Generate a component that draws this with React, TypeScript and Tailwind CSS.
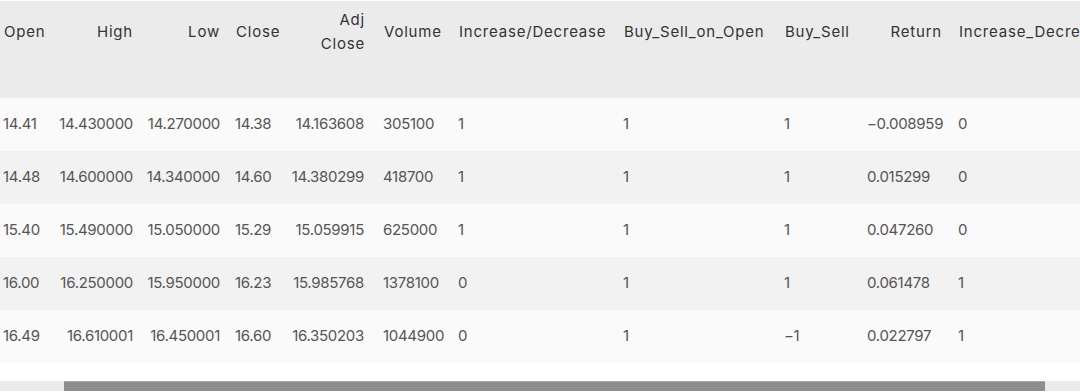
import React from 'react';

type Col = {
  name: string;
  w: string;
  head: string;
  cell: string;
};

const cols: Col[] = [
  { name: 'Open', w: 'w-[56px]', head: 'justify-start pl-[4px]', cell: 'justify-start pl-[3px]' },
  { name: 'High', w: 'w-[85px]', head: 'justify-end pr-[8px]', cell: 'justify-end pr-[8px]' },
  { name: 'Low', w: 'w-[87px]', head: 'justify-end pr-[8px]', cell: 'justify-end pr-[8px]' },
  { name: 'Close', w: 'w-[60px]', head: 'justify-start pl-[8px]', cell: 'justify-start pl-[7px]' },
  { name: 'Adj Close', w: 'w-[84px]', head: 'justify-end pr-[7px] text-right', cell: 'justify-end pr-[8px]' },
  { name: 'Volume', w: 'w-[79px]', head: 'justify-start pl-[12px]', cell: 'justify-start pl-[11px]' },
  { name: 'Increase/Decrease', w: 'w-[165px]', head: 'justify-start pl-[8px]', cell: 'justify-start pl-[7px]' },
  { name: 'Buy_Sell_on_Open', w: 'w-[161px]', head: 'justify-start pl-[8px]', cell: 'justify-start pl-[7px]' },
  { name: 'Buy_Sell', w: 'w-[82px]', head: 'justify-start pl-[8px]', cell: 'justify-start pl-[7px]' },
  { name: 'Return', w: 'w-[91px]', head: 'justify-end pr-[8px]', cell: 'justify-start pl-[8px]' },
  { name: 'Increase_Decrease', w: 'w-[160px]', head: 'justify-start pl-[9px]', cell: 'justify-start pl-[8px]' },
];

const rows: string[][] = [
  ['14.41', '14.430000', '14.270000', '14.38', '14.163608', '305100', '1', '1', '1', '\u22120.008959', '0'],
  ['14.48', '14.600000', '14.340000', '14.60', '14.380299', '418700', '1', '1', '1', '0.015299', '0'],
  ['15.40', '15.490000', '15.050000', '15.29', '15.059915', '625000', '1', '1', '1', '0.047260', '0'],
  ['16.00', '16.250000', '15.950000', '16.23', '15.985768', '1378100', '0', '1', '1', '0.061478', '1'],
  ['16.49', '16.610001', '16.450001', '16.60', '16.350203', '1044900', '0', '1', '\u22121', '0.022797', '1'],
];

export default function App() {
  return (
    <div
      className="w-[1080px] h-[392px] overflow-hidden bg-white flex flex-col"
      style={{ fontFamily: 'Inter, "Noto Sans", sans-serif' }}
    >
      <div className="mt-[1px] overflow-hidden">
        {/* header */}
        <div className="flex h-[97px] bg-[#ebebeb] text-[#333333] text-[15px] leading-[24px] tracking-[0.8px] whitespace-nowrap">
          {cols.map((c) => (
            <div key={c.name} className={`${c.w} shrink-0 h-[62px] flex items-center overflow-hidden ${c.head}`}>
              {c.name === 'Adj Close' ? (
                <span className="text-right">
                  Adj
                  <br />
                  Close
                </span>
              ) : (
                <span>{c.name}</span>
              )}
            </div>
          ))}
        </div>

        {/* body */}
        {rows.map((r, i) => (
          <div
            key={i}
            className={`flex h-[53px] items-center text-[15px] tracking-[-0.3px] text-[#555555] whitespace-nowrap ${
              i % 2 === 0 ? 'bg-[#fafafa]' : 'bg-[#f2f2f2]'
            }`}
          >
            {r.map((v, j) => (
              <div key={j} className={`${cols[j].w} shrink-0 flex ${cols[j].cell}`}>
                {v}
              </div>
            ))}
          </div>
        ))}
      </div>

      {/* horizontal scrollbar */}
      <div className="mt-[18px] h-[10px] bg-[#ebebeb] flex">
        <div className="ml-[64px] w-[981px] h-full bg-[#8e8e8e] border-t border-[#a9a9a9]" />
      </div>
    </div>
  );
}
